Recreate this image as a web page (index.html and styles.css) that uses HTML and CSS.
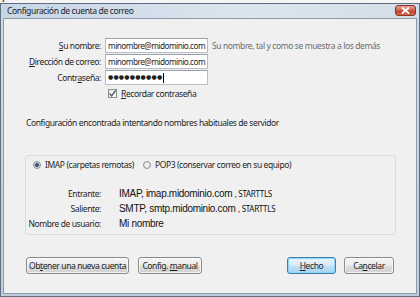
FILE: index.html
```html
<!DOCTYPE html>
<html lang="es">
<head>
<meta charset="utf-8">
<title>Configuración de cuenta de correo</title>
<link rel="stylesheet" href="styles.css">
</head>
<body>
<div class="backapp"><div class="backapp-text">presentada &nbsp; &nbsp; &nbsp; &nbsp; ☐ Para &nbsp; &nbsp; &nbsp; &nbsp; Grabar documento &nbsp; &nbsp; &nbsp; &nbsp; Pública</div></div>
<div class="window">
  <div class="titlebar">
    <span class="title">Configuración de cuenta de correo</span>
    <span class="close"><svg width="9" height="7" viewBox="0 0 9 7"><path d="M1 0.5 L8 6.5 M8 0.5 L1 6.5" stroke="#fff" stroke-width="1.8"/></svg></span>
  </div>
  <div class="body">
    <div class="form">
      <label class="lbl"><u>S</u>u nombre:</label>
      <div class="input">minombre@midominio.com</div>
      <span class="hint">Su nombre, tal y como se muestra a los demás</span>

      <label class="lbl"><u>D</u>irección de correo:</label>
      <div class="input">minombre@midominio.com</div>
      <span></span>

      <label class="lbl">Contr<u>a</u>seña:</label>
      <div class="input input-pass">●●●●●●●●●●<span class="caret"></span></div>
      <span></span>

      <span></span>
      <div class="check">
        <span class="cb"><svg width="9" height="9" viewBox="0 0 9 9"><path d="M1.5 4.5 L3.6 7 L7.6 1.5" fill="none" stroke="#4a5a6c" stroke-width="1.3"/></svg></span>
        <span><u>R</u>ecordar contraseña</span>
      </div>
      <span></span>
    </div>

    <p class="status">Configuración encontrada intentando nombres habituales de servidor</p>

    <div class="group">
      <div class="radios">
        <span class="radio radio-on"></span><span class="radio-text">IMAP (carpetas remotas)</span>
        <span class="radio radio-off"></span><span class="radio-text">POP3 (conservar correo en su equipo)</span>
      </div>
      <div class="details">
        <span class="dlbl">Entrante:</span>
        <span class="dval">IMAP, imap.midominio.com <small>, STARTTLS</small></span>
        <span class="dlbl">Saliente:</span>
        <span class="dval">SMTP, smtp.midominio.com <small>, STARTTLS</small></span>
        <span class="dlbl">Nombre de usuario:</span>
        <span class="dval">Mi nombre</span>
      </div>
    </div>

    <div class="buttons">
      <button class="btn btn-new">Ob<u>t</u>ener una nueva cuenta</button>
      <button class="btn btn-manual">Config. <u>m</u>anual</button>
      <span class="spacer"></span>
      <button class="btn btn-default btn-done"><u>H</u>echo</button>
      <button class="btn btn-cancel">Ca<u>n</u>celar</button>
    </div>
  </div>
</div>
</body>
</html>
```
FILE: styles.css
```css
* { box-sizing: border-box; }
html, body {
  margin: 0;
  width: 420px;
  height: 297px;
  overflow: hidden;
  background: #e8ebee;
}
body {
  font-family: "Noto Sans", "DejaVu Sans", sans-serif;
  font-size: 8.5px;
  letter-spacing: -0.4px;
  color: #1e1e1e;
}
u { text-decoration: underline; text-underline-offset: 1px; }

.backapp {
  height: 3px;
  overflow: hidden;
  background: #f4f4f4;
}
.backapp-text {
  margin-top: -10px;
  padding-left: 2px;
  font-family: "Liberation Serif", serif;
  font-size: 11px;
  line-height: 12px;
  letter-spacing: 0;
  white-space: nowrap;
  color: #222;
}

.window {
  height: 294px;
  display: flex;
  flex-direction: column;
  border: 1px solid #5f6f80;
  padding: 0 2px 2px;
  background: linear-gradient(#cfdbe7, #bfcedc);
}
.titlebar {
  height: 14px;
  display: flex;
  align-items: flex-start;
  justify-content: space-between;
  margin: 0 -2px;
  padding: 0 3px 0 6px;
  background: linear-gradient(to right, #c7d6e5, #dbe5ee 60%, #d3dee9);
}
.title {
  line-height: 14px;
  font-size: 8.6px;
  color: #1b2430;
}
.close {
  width: 21px;
  height: 11px;
  margin-top: 1px;
  display: flex;
  align-items: center;
  justify-content: center;
  border: 1px solid #873526;
  border-radius: 3px;
  background: linear-gradient(#e4a295, #cf5c48 50%, #be3d2a 51%, #d46a56);
}

.body {
  flex: 1;
  border: 1px solid #8d9cab;
  background: #f0f0f0;
  display: flex;
  flex-direction: column;
}

.form {
  margin-top: 19px;
  display: grid;
  grid-template-columns: 97px 103px auto;
  grid-auto-rows: 15px;
  column-gap: 4px;
  row-gap: 1px;
  align-items: center;
}
.lbl {
  text-align: right;
  white-space: nowrap;
}
.input {
  height: 15px;
  line-height: 13px;
  padding-left: 2px;
  border: 1px solid #b8bec6;
  border-top-color: #9aa0a8;
  background: #fff;
  white-space: nowrap;
  overflow: hidden;
  font-size: 8.2px;
  letter-spacing: -0.5px;
}
.input-pass {
  font-size: 6px;
  letter-spacing: 0.2px;
  display: flex;
  align-items: center;
}
.caret {
  display: inline-block;
  width: 1px;
  height: 10px;
  margin-left: 1px;
  background: #000;
}
.hint {
  color: #6e6e6e;
  white-space: nowrap;
}
.check {
  display: flex;
  align-items: center;
  gap: 4px;
  padding-left: 3px;
}
.cb {
  width: 9px;
  height: 9px;
  border: 1px solid #8f8f8f;
  background: linear-gradient(135deg, #e8e8e8, #fff);
  display: flex;
}
.cb svg { margin: -1px; }

.status {
  margin: 16px 0 0 22px;
  line-height: 12px;
}

.group {
  margin: 26px 20px 0 21px;
  height: 80px;
  border: 1px solid #d5dde3;
  border-radius: 3px;
  padding: 3px 0 0 6px;
}
.radios {
  display: flex;
  align-items: center;
  height: 11px;
}
.radio {
  width: 8px;
  height: 8px;
  border-radius: 50%;
  border: 1px solid #8e8f8f;
  background: radial-gradient(circle, #f6f6f6, #d9d9d9);
  margin-right: 4px;
  margin-left: 1px;
}
.radio-on {
  background: radial-gradient(circle, #3f5c70 0 1.6px, #9bb2c3 2px, #e2e8ec 3px);
}
.radio-off {
  margin-left: 9px;
}
.details {
  margin-top: 16px;
  margin-left: -6px;
  display: grid;
  grid-template-columns: 75px auto;
  column-gap: 18px;
  grid-auto-rows: 15px;
  align-items: center;
}
.dlbl {
  text-align: right;
  white-space: nowrap;
}
.dval {
  font-family: "Liberation Sans", Arial, sans-serif;
  font-size: 10px;
  letter-spacing: -0.3px;
  color: #111;
  white-space: nowrap;
}
.dval small {
  font-family: "Noto Sans", sans-serif;
  font-size: 8px;
  letter-spacing: -0.3px;
}

.buttons {
  margin: 22px 22px 0 22px;
  display: flex;
  align-items: center;
}
.spacer { flex: 1; }
.btn {
  height: 17px;
  padding: 0;
  font: inherit;
  letter-spacing: -0.4px;
  color: #1e1e1e;
  border: 1px solid #8a8a8a;
  border-radius: 3px;
  background: linear-gradient(#f6f6f6, #eaeaea 50%, #dcdcdc 51%, #d2d2d2);
  box-shadow: inset 0 0 0 1px rgba(255,255,255,0.7);
  text-align: center;
}
.btn-new { width: 103px; }
.btn-manual { width: 64px; margin-left: 9px; }
.btn-done { width: 49px; }
.btn-cancel { width: 50px; margin-left: 8px; }
.btn-default {
  border-color: #3c7fb1;
  background: linear-gradient(#e8f4fc, #d6eafa 50%, #bfe0f7 51%, #a8d4f3);
  box-shadow: inset 0 0 0 1px #8fd6f5;
}
```
